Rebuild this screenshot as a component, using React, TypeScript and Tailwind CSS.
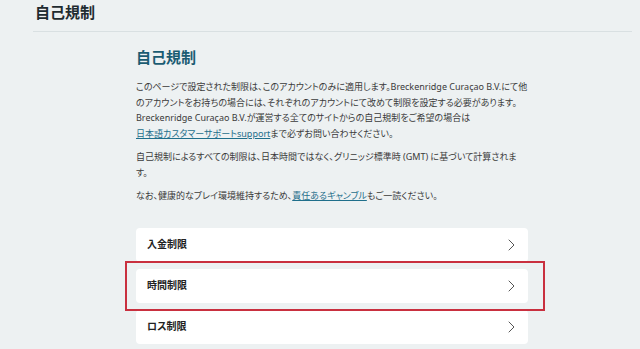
const limits = ["入金制限", "時間制限", "ロス制限"];

function Chevron() {
  return (
    <svg width="7" height="12" viewBox="0 0 7 12" fill="none" className="text-[#555]">
      <polyline points="1,1 6,6 1,11" stroke="currentColor" strokeWidth="1" strokeLinecap="round" strokeLinejoin="round" />
    </svg>
  );
}

export default function App() {
  return (
    <div className="min-h-screen w-full overflow-hidden bg-[#edf1f2] font-['Noto_Sans','Noto_Sans_CJK_JP',sans-serif] [font-feature-settings:'palt']">
      {/* Page header */}
      <div className="ml-[33px] mr-[8px] h-[32px] border-b border-[#d9e0e2]">
        <h1 className="pl-[2px] pt-[2px] text-[15px] font-bold leading-[20px] text-[#1f2b30]">自己規制</h1>
      </div>

      {/* Content */}
      <div className="ml-[136px] w-[392px] pt-[15px]">
        <h2 className="text-[15px] font-bold leading-[20px] text-[#1b5c72]">自己規制</h2>

        <div className="mt-[12px] flex flex-col gap-[8px] whitespace-nowrap text-[9px] leading-[15.5px] text-[#3a3a3a]">
          <p>
            このページで設定された制限は、このアカウントのみに適用します。Breckenridge Curaçao B.V.にて他
            <br />
            のアカウントをお持ちの場合には、それぞれのアカウントにて改めて制限を設定する必要があります。
            <br />
            Breckenridge Curaçao B.V.が運営する全てのサイトからの自己規制をご希望の場合は
            <br />
            <span className="text-[#1f6f8b] underline">日本語カスタマーサポートsupport</span>まで必ずお問い合わせください。
          </p>
          <p>
            自己規制によるすべての制限は、日本時間ではなく、グリニッジ標準時 (GMT) に基づいて計算されま
            <br />
            す。
          </p>
          <p>
            なお、健康的なプレイ環境維持するため、<span className="text-[#1f6f8b] underline">責任あるギャンブル</span>もご一読ください。
          </p>
        </div>

        {/* Limit cards */}
        <div className="relative mt-[24px] flex flex-col gap-[7px]">
          {limits.map((label) => (
            <div key={label} className="flex h-[34px] items-center justify-between rounded-[4px] bg-white pl-[11px] pr-[13px]">
              <span className="text-[10px] font-semibold text-[#222]">{label}</span>
              <Chevron />
            </div>
          ))}
          <div className="pointer-events-none absolute left-[-11px] top-[33px] h-[50px] w-[420px] border-2 border-[#c9303f]" />
        </div>
      </div>
    </div>
  );
}
